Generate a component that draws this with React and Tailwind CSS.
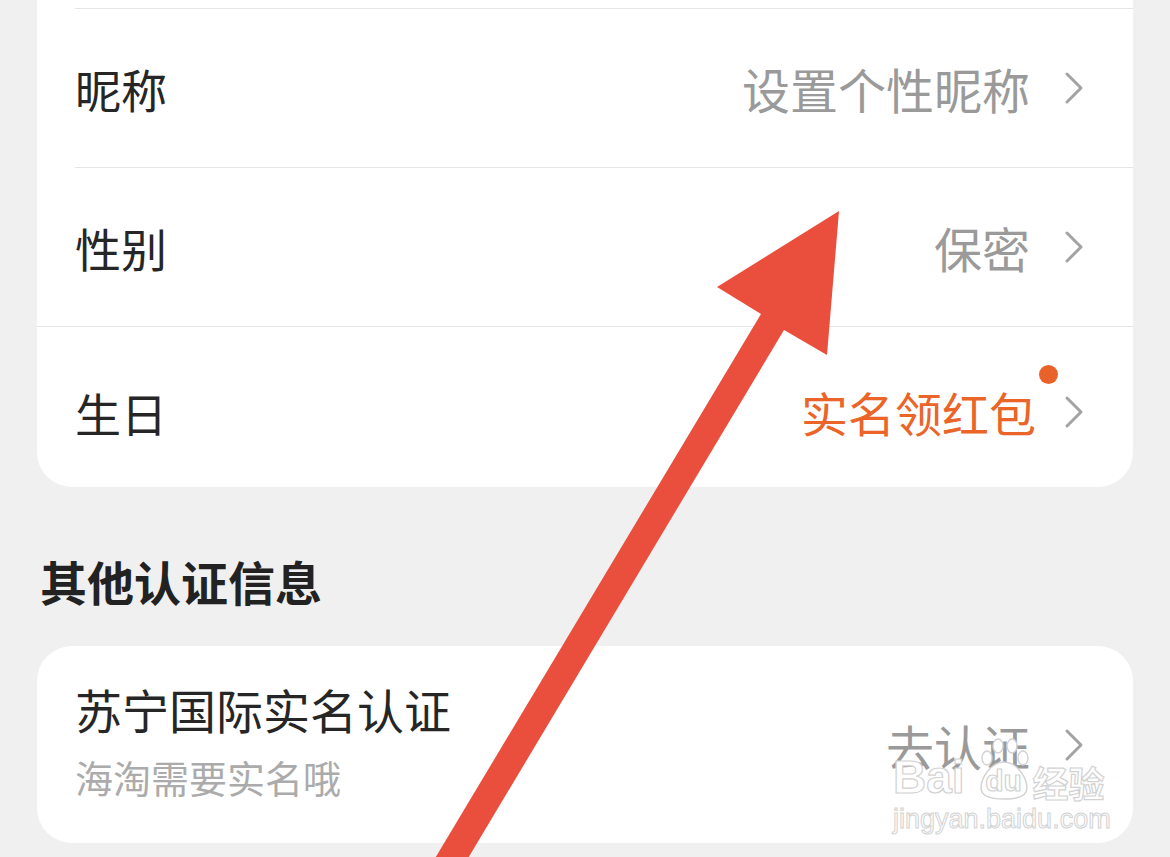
import React from 'react';

function Chevron({ className = '' }) {
  return (
    <svg width="20" height="34" viewBox="0 0 20 34" className={className}>
      <polyline points="3,3 17,17 3,31" fill="none" stroke="#a3a3a3" strokeWidth="3" strokeLinecap="round" strokeLinejoin="round" />
    </svg>
  );
}

function Arrow() {
  return (
    <svg width="1170" height="857" viewBox="0 0 1170 857" className="pointer-events-none absolute left-0 top-0">
      <polygon
        points="839,211 717,287 761,314 428,870 461,870 784,330 827,355"
        fill="#ea4f3d"
      />
    </svg>
  );
}

function Watermark() {
  return (
    <div className="pointer-events-none absolute left-[893px] top-[738px] flex flex-col items-start font-['Liberation_Sans',sans-serif] text-white [-webkit-text-stroke:1.2px_#d2d2d2]">
      <div className="flex items-end leading-none">
        <span className="text-[46px] font-bold">Bai</span>
        <span className="relative ml-[12px] flex h-[62px] w-[54px] items-end justify-center">
          <svg width="54" height="62" viewBox="0 0 54 62" className="absolute left-0 top-0">
            <g fill="white" stroke="#d2d2d2" strokeWidth="1.4">
              <ellipse cx="10" cy="20" rx="5" ry="7" />
              <ellipse cx="21" cy="8" rx="5" ry="7" />
              <ellipse cx="35" cy="8" rx="5" ry="7" />
              <ellipse cx="46" cy="20" rx="5" ry="7" />
              <path d="M27 24 C14 24 4 40 4 50 C4 58 12 61 27 61 C42 61 50 58 50 50 C50 40 40 24 27 24 Z" />
            </g>
          </svg>
          <span className="relative mb-[4px] text-[30px] font-bold">du</span>
        </span>
        <span className="ml-[2px] font-['Noto_Sans_CJK_SC',sans-serif] text-[36px] font-bold">经验</span>
      </div>
      <div className="mt-[6px] text-[27px] leading-none [-webkit-text-stroke:1px_#d2d2d2]">jingyan.baidu.com</div>
    </div>
  );
}

function Row({ label, value, valueClass = 'text-[48px] text-[#9a9a9a]', dot = false }) {
  return (
    <div className="flex h-full items-center pr-[49px]">
      <span className="text-[46px] leading-[56px] text-[#262626]">{label}</span>
      <span className={`relative ml-auto leading-[56px] ${valueClass}`}>
        {value}
        {dot && <span className="absolute right-[-22px] top-[-19px] h-[19px] w-[19px] rounded-full bg-[#e8622a]" />}
      </span>
      <Chevron className={dot ? 'ml-[28px]' : 'ml-[34px]'} />
    </div>
  );
}

export default function App() {
  return (
    <div className="relative h-[857px] w-full overflow-hidden bg-[#f0f0f0] px-[37px] font-['Noto_Sans_CJK_SC',sans-serif]">
      {/* personal info card, top cut off */}
      <div className="rounded-b-[35px] bg-white">
        <div className="pl-[38px]">
          <div className="h-[9px] border-b border-[#e6e6e6]" />
        </div>
        <div className="pl-[38px]">
          <div className="h-[159px] border-b border-[#e6e6e6]">
            <Row label="昵称" value="设置个性昵称" />
          </div>
        </div>
        <div className="h-[159px] border-b border-[#e6e6e6] pl-[38px]">
          <Row label="性别" value="保密" />
        </div>
        <div className="h-[160px] pl-[38px] pt-[10px]">
          <Row label="生日" value="实名领红包" valueClass="text-[47px] text-[#eb6428]" dot />
        </div>
      </div>

      <div className="pl-[3px] pt-[70px] pb-[41px] text-[47px] font-bold leading-[48px] text-[#222]">其他认证信息</div>

      <div className="flex h-[197px] items-center rounded-[35px] bg-white pl-[38px] pr-[49px]">
        <div className="flex flex-col pb-[10px]">
          <span className="text-[47px] leading-[56px] text-[#262626]">苏宁国际实名认证</span>
          <span className="mt-[18px] text-[38px] leading-[44px] text-[#ababab]">海淘需要实名哦</span>
        </div>
        <span className="ml-auto text-[48px] leading-[56px] text-[#9a9a9a]">去认证</span>
        <Chevron className="ml-[34px]" />
      </div>

      <Watermark />
      <Arrow />
    </div>
  );
}
